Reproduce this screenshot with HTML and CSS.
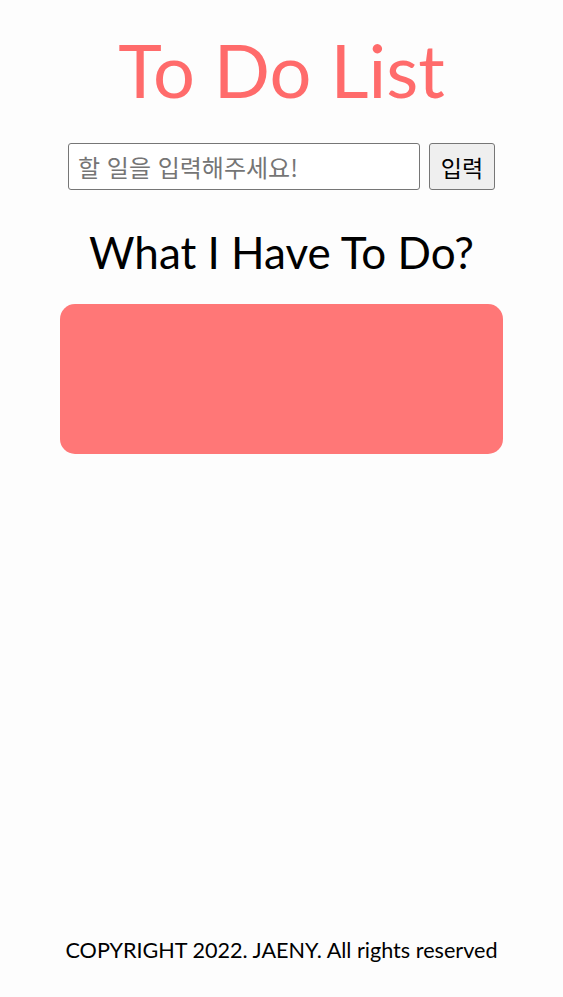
FILE: index.html
```html
<!DOCTYPE html>
<html lang="ko">
<head>
<meta charset="utf-8">
<title>To Do List</title>
<link rel="stylesheet" href="styles.css">
</head>
<body>
<div class="page">
  <main class="main">
    <h1 class="title">To Do List</h1>
    <form class="add-form">
      <input class="add-input" type="text" placeholder="할 일을 입력해주세요!">
      <button class="add-btn" type="button">입력</button>
    </form>
    <h2 class="subtitle">What I Have To Do?</h2>
    <div class="list-box"></div>
  </main>
  <footer class="footer">COPYRIGHT 2022. JAENY. All rights reserved</footer>
</div>
</body>
</html>
```
FILE: styles.css
```css
* { box-sizing: border-box; }
html, body { margin: 0; padding: 0; }
body {
  background: #fdfdfd;
  font-family: "Lato", "Noto Sans CJK KR", sans-serif;
  color: #000;
}
.page {
  min-height: 997px;
  display: flex;
  flex-direction: column;
  align-items: center;
}
.main {
  display: flex;
  flex-direction: column;
  align-items: center;
  width: 100%;
}
.title {
  margin: 28px 0 0;
  font-size: 74px;
  line-height: 84px;
  font-weight: 400;
  color: #ff6b6b;
}
.add-form {
  margin-top: 31px;
  display: flex;
  gap: 9px;
}
.add-input {
  width: 352px;
  height: 47px;
  border: 1px solid #767676;
  border-radius: 3px;
  padding: 0 9px;
  font-family: "Noto Sans CJK KR", sans-serif;
  font-size: 24px;
  background: #fff;
}
.add-input::placeholder { color: #757575; }
.add-btn {
  width: 66px;
  height: 47px;
  border: 1px solid #767676;
  border-radius: 3px;
  background: #efefef;
  font-family: "Noto Sans CJK KR", sans-serif;
  font-size: 23px;
  padding: 0;
  color: #000;
}
.subtitle {
  margin: 35px 0 0;
  font-size: 44px;
  line-height: 54px;
  font-weight: 400;
}
.list-box {
  margin-top: 25px;
  width: 443px;
  height: 150px;
  border-radius: 15px;
  background: #ff7777;
}
.footer {
  margin-top: auto;
  margin-bottom: 32px;
  font-size: 21.6px;
  line-height: 30px;
}
```
